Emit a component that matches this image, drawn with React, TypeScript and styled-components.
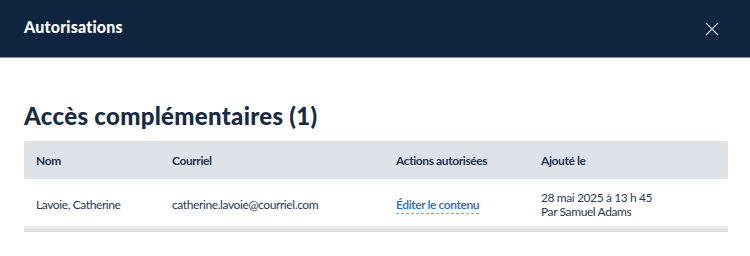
import styled, { createGlobalStyle } from 'styled-components';
import { FC } from 'react';

const GlobalStyle = createGlobalStyle`
  html, body {
    margin: 0;
    padding: 0;
    background: #ffffff;
  }
  body {
    font-family: Lato, "Noto Sans", sans-serif;
    color: #223654;
  }
`;

type Row = {
  name: string;
  email: string;
  action: string;
  date: string;
  by: string;
};

const rows: Row[] = [
  {
    name: 'Lavoie, Catherine',
    email: 'catherine.lavoie@courriel.com',
    action: 'Éditer le contenu',
    date: '28 mai 2025 à 13 h 45',
    by: 'Par Samuel Adams',
  },
];

const CloseIcon: FC = () => (
  <svg width="14" height="14" viewBox="0 0 14 14" fill="none">
    <path d="M1 1L13 13M13 1L1 13" stroke="#c9d1dc" strokeWidth="1.3" />
  </svg>
);

export default function App() {
  return (
    <>
      <GlobalStyle />
      <Dialog>
        <Header>
          <HeaderTitle>Autorisations</HeaderTitle>
          <CloseButton aria-label="Fermer">
            <CloseIcon />
          </CloseButton>
        </Header>
        <Body>
          <Title>Accès complémentaires ({rows.length})</Title>
          <Table>
            <colgroup>
              <col style={{ width: 136 }} />
              <col style={{ width: 224 }} />
              <col style={{ width: 145 }} />
              <col />
            </colgroup>
            <thead>
              <tr>
                <Th>Nom</Th>
                <Th>Courriel</Th>
                <Th>Actions autorisées</Th>
                <Th>Ajouté le</Th>
              </tr>
            </thead>
            <tbody>
              {rows.map((r) => (
                <tr key={r.email}>
                  <Td>{r.name}</Td>
                  <Td>{r.email}</Td>
                  <Td>
                    <ActionLink href="#">{r.action}</ActionLink>
                  </Td>
                  <Td>
                    <div>{r.date}</div>
                    <div>{r.by}</div>
                  </Td>
                </tr>
              ))}
            </tbody>
          </Table>
          <TableShadow />
        </Body>
      </Dialog>
    </>
  );
}

const Dialog = styled.div`
  width: 750px;
  height: 256px;
  background: #ffffff;
`;

const Header = styled.header`
  height: 57px;
  background: #10253f;
  border-bottom: 1px solid #8393a7;
  display: flex;
  align-items: center;
  justify-content: space-between;
  padding: 0 31px 0 24px;
`;

const HeaderTitle = styled.h2`
  margin: 0;
  margin-top: -4px;
  font-size: 16px;
  font-weight: 900;
  color: #ffffff;
  letter-spacing: 0.2px;
`;

const CloseButton = styled.button`
  background: none;
  border: 0;
  padding: 0;
  display: flex;
  cursor: pointer;
`;

const Body = styled.div`
  padding: 43px 22px 0 24px;
`;

const Title = styled.h1`
  margin: 0 0 10px;
  font-size: 24px;
  line-height: 30px;
  font-weight: 900;
  color: #162a44;
  letter-spacing: 0.3px;
`;

const Table = styled.table`
  width: 100%;
  table-layout: fixed;
  border-collapse: collapse;
  font-size: 12px;
  letter-spacing: -0.4px;
`;

const Th = styled.th`
  background: #dee2e9;
  height: 38px;
  padding: 0 12px;
  text-align: left;
  font-weight: 700;
  color: #223654;
`;

const Td = styled.td`
  height: 43px;
  padding: 4px 12px 0;
  vertical-align: middle;
  color: #2a3b55;
  line-height: 14px;
`;

const ActionLink = styled.a`
  color: #2169d3;
  font-weight: 600;
  text-decoration: none;
  border-bottom: 1px dashed #7aa2dd;
  padding-bottom: 1px;
`;

const TableShadow = styled.div`
  height: 6px;
  background: linear-gradient(#f2f2f2, #d9d9d9);
`;
